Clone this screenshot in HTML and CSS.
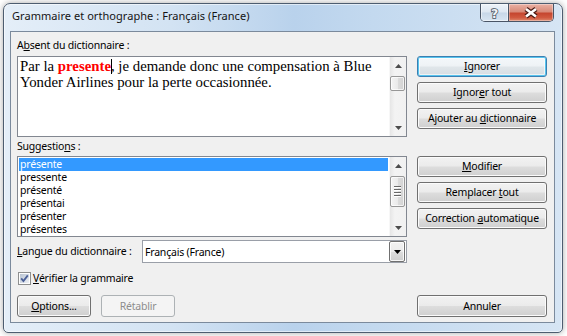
FILE: index.html
```html
<!DOCTYPE html>
<html lang="fr">
<head>
<meta charset="utf-8">
<title>Grammaire et orthographe</title>
<link rel="stylesheet" href="styles.css">
</head>
<body>
<div class="window">
  <div class="titlebar">
    <span class="title">Grammaire et orthographe : Français (France)</span>
    <div class="caption">
      <div class="cap-btn cap-help">
        <svg width="28" height="17" viewBox="0 0 28 17"><text x="14" y="14" text-anchor="middle" class="qmark">?</text></svg>
      </div>
      <div class="cap-btn cap-close">
        <svg width="44" height="17" viewBox="0 0 44 17"><path d="M17 5 L27 12.5 M27 5 L17 12.5" class="x-out"/><path d="M17 5 L27 12.5 M27 5 L17 12.5" class="x-in"/></svg>
      </div>
    </div>
  </div>
  <div class="client">
    <div class="row">
      <div class="col-left">
        <div class="label first">A<u>b</u>sent du dictionnaire :</div>
        <div class="box textbox">
          <div class="box-content serif">Par la <b class="err">presente</b><span class="caret"></span>, je demande donc une compensation à Blue<br>Yonder Airlines pour la perte occasionnée.</div>
          <div class="vscroll">
            <div class="arrow"><svg width="7" height="4" viewBox="0 0 7 4"><polygon points="0,4 3.5,0 7,4" class="tri"/></svg></div>
            <div class="track"><div class="thumb thumb-small"></div></div>
            <div class="arrow"><svg width="7" height="4" viewBox="0 0 7 4"><polygon points="0,0 7,0 3.5,4" class="tri"/></svg></div>
          </div>
        </div>
      </div>
      <div class="col-right">
        <button type="button" class="btn btn-default"><u>I</u>gnorer</button>
        <button type="button" class="btn">Ignor<u>e</u>r tout</button>
        <button type="button" class="btn">Ajouter au <u>d</u>ictionnaire</button>
      </div>
    </div>

    <div class="row">
      <div class="col-left">
        <div class="label second">Suggestio<u>n</u>s :</div>
        <div class="box listbox">
          <ul class="items">
            <li class="item selected">présente</li>
            <li class="item">pressente</li>
            <li class="item">présenté</li>
            <li class="item">présentai</li>
            <li class="item">présenter</li>
            <li class="item">présentes</li>
          </ul>
          <div class="vscroll">
            <div class="arrow"><svg width="7" height="4" viewBox="0 0 7 4"><polygon points="0,4 3.5,0 7,4" class="tri"/></svg></div>
            <div class="track"><div class="thumb thumb-large"><span class="grip"></span><span class="grip"></span><span class="grip"></span><span class="grip"></span></div></div>
            <div class="arrow"><svg width="7" height="4" viewBox="0 0 7 4"><polygon points="0,0 7,0 3.5,4" class="tri"/></svg></div>
          </div>
        </div>
      </div>
      <div class="col-right">
        <button type="button" class="btn"><u>M</u>odifier</button>
        <button type="button" class="btn">Remplacer <u>t</u>out</button>
        <button type="button" class="btn">Correction <u>a</u>utomatique</button>
      </div>
    </div>

    <div class="row lang-row">
      <div class="col-left lang">
        <span class="lang-label"><u>L</u>angue du dictionnaire :</span>
        <div class="combo">
          <span class="combo-text">Français (France)</span>
          <span class="combo-btn"><svg width="7" height="4" viewBox="0 0 7 4"><polygon points="0,0 7,0 3.5,4" class="tri-dark"/></svg></span>
        </div>
      </div>
    </div>

    <div class="row check-row">
      <svg class="checkbox" width="13" height="13" viewBox="0 0 13 13">
        <defs>
          <linearGradient id="cbg" x1="0" y1="0" x2="1" y2="1">
            <stop offset="0" stop-color="#b9c4d2"/>
            <stop offset="1" stop-color="#eef1f5"/>
          </linearGradient>
        </defs>
        <rect x="0.5" y="0.5" width="12" height="12" fill="#fdfdfd" stroke="#8e8f8f"/>
        <rect x="2" y="2" width="9" height="9" fill="url(#cbg)"/>
        <path d="M3.2 6.4 L5.4 9 L9.8 3.4" fill="none" stroke="#4a5f97" stroke-width="1.8"/>
      </svg>
      <span class="check-label"><u>V</u>érifier la grammaire</span>
    </div>

    <div class="row bottom-row">
      <div class="col-left bottom-left">
        <button type="button" class="btn btn-small"><u>O</u>ptions...</button>
        <button type="button" class="btn btn-small btn-disabled">Rétablir</button>
      </div>
      <div class="col-right">
        <button type="button" class="btn btn-tall">Annuler</button>
      </div>
    </div>
  </div>
</div>
</body>
</html>
```

FILE: styles.css
```css
* { box-sizing: border-box; }
html, body { margin: 0; padding: 0; }
body {
  width: 567px;
  height: 336px;
  overflow: hidden;
  background: #ffffff;
  font-family: "Noto Sans", "Open Sans", sans-serif;
  font-size: 10.5px;
  font-weight: 400;
  letter-spacing: -0.2px;
  color: #000;
  position: relative;
}

.window {
  position: absolute;
  left: 3px;
  top: 3px;
  width: 560px;
  height: 330px;
  border: 1px solid #4d5d70;
  border-radius: 7px 7px 5px 5px;
  background: linear-gradient(90deg, #e4eef8 0%, #d3e3f3 30%, #b9d2ec 52%, #c3d9ef 66%, #d6e5f4 100%);
  box-shadow: inset 0 0 0 1px rgba(255,255,255,0.55), 0 0 6px rgba(0,0,0,0.35);
  padding: 0 7px 9px 6px;
  display: flex;
  flex-direction: column;
}

.titlebar {
  height: 27px;
  display: flex;
  align-items: flex-start;
}
.title {
  margin-top: 4px;
  padding-left: 2px;
  font-size: 11px;
  letter-spacing: 0.05px;
  line-height: 16px;
  color: #141414;
}
.caption {
  margin-left: auto;
  margin-right: 1px;
  display: flex;
  height: 18px;
  border: 1px solid #4a5566;
  border-top: none;
  border-radius: 0 0 5px 5px;
  overflow: hidden;
}
.cap-btn { height: 17px; display: flex; }
.cap-help {
  width: 28px;
  border-right: 1px solid #4a5566;
  background: linear-gradient(180deg, #eef3f9 0%, #dde7f2 48%, #c7d7e8 52%, #d8e5f2 100%);
  box-shadow: inset 0 0 0 1px rgba(255,255,255,0.5);
}
.cap-close {
  width: 44px;
  background: linear-gradient(180deg, #eab1a4 0%, #d88a78 46%, #c5462f 54%, #d0593f 80%, #de8a6e 100%);
  box-shadow: inset 0 0 0 1px rgba(255,255,255,0.35);
}
.qmark {
  font-family: "DejaVu Sans", sans-serif;
  font-size: 13px;
  font-weight: bold;
  fill: #f2f4f6;
  stroke: #4b5562;
  stroke-width: 1.6px;
  paint-order: stroke;
}
.x-out { stroke: #4a1b14; stroke-width: 5; fill: none; }
.x-in { stroke: #ffffff; stroke-width: 2.6; fill: none; }

.client {
  width: 545px;
  height: 292px;
  border: 1px solid #7b8a9c;
  background: #f0f0f0;
  padding: 5px 7px 0 6px;
  display: flex;
  flex-direction: column;
}

.row { display: flex; gap: 10px; }
.col-left { width: 390px; display: flex; flex-direction: column; }
.col-right {
  width: 130px;
  display: flex;
  flex-direction: column;
  gap: 5px;
  padding-top: 19px;
}

.label { height: 19px; line-height: 15px; }
.label.first { padding-top: 1px; }
.label.second { padding-top: 2px; }
u { text-underline-offset: 1px; }

.box {
  height: 81px;
  border: 1px solid #828790;
  background: #ffffff;
  display: flex;
}
.box-content { flex: 1; padding: 1px 2px; }
.serif {
  font-family: "Liberation Serif", "Times New Roman", serif;
  font-size: 14.8px;
  letter-spacing: 0;
  line-height: 16px;
  color: #000;
}
.err { color: #ff0000; font-weight: bold; }
.caret {
  display: inline-block;
  width: 1px;
  height: 15px;
  background: #000;
  vertical-align: -3px;
  margin-right: -1px;
}

.vscroll {
  width: 17px;
  display: flex;
  flex-direction: column;
  background: linear-gradient(90deg, #e6e6e6 0%, #f3f3f3 30%, #f1f1f1 100%);
  border-left: 1px solid #f7f7f7;
}
.arrow {
  height: 17px;
  display: flex;
  align-items: center;
  justify-content: center;
}
.tri { fill: #4c4c4c; }
.tri-dark { fill: #000; }
.track { flex: 1; padding-top: 2px; }
.thumb {
  width: 15px;
  border: 1px solid #979797;
  border-radius: 2px;
  background: linear-gradient(90deg, #f4f4f4 0%, #eaeaea 50%, #dcdcdc 52%, #d3d3d3 100%);
  box-shadow: inset 0 0 0 1px rgba(255,255,255,0.7);
}
.thumb-small { height: 15px; }
.thumb-large {
  height: 31px;
  display: flex;
  flex-direction: column;
  align-items: center;
  justify-content: center;
  gap: 1px;
}
.grip {
  display: block;
  width: 7px;
  height: 2px;
  border-top: 1px solid #676767;
  border-bottom: 1px solid #ffffff;
}

.items {
  list-style: none;
  margin: 0;
  padding: 1px;
  flex: 1;
}
.item {
  height: 13px;
  line-height: 13px;
  padding-left: 1px;
  white-space: nowrap;
}
.item.selected { background: #3399ff; color: #ffffff; }

.lang-row { margin-top: 3px; }
.lang {
  flex-direction: row;
  align-items: center;
  height: 23px;
}
.lang-label { line-height: 15px; }
.combo {
  margin-left: auto;
  width: 265px;
  height: 23px;
  border: 1px solid #9a9fa8;
  background: #ffffff;
  display: flex;
  align-items: center;
  padding: 0 1px;
}
.combo-text { flex: 1; padding-left: 1px; }
.combo-btn {
  width: 16px;
  height: 21px;
  border: 1px solid #707070;
  border-radius: 2px;
  background: linear-gradient(180deg, #f2f2f2 0%, #ebebeb 50%, #dddddd 52%, #cfcfcf 100%);
  box-shadow: inset 0 0 0 1px rgba(255,255,255,0.8);
  display: flex;
  align-items: center;
  justify-content: center;
}

.check-row {
  margin-top: 9px;
  height: 13px;
  align-items: center;
  gap: 2px;
}
.checkbox { margin-left: 1px; display: block; }
.check-label { line-height: 15px; }

.bottom-row { margin-top: 10px; }
.bottom-left { flex-direction: row; gap: 10px; }
.bottom-row .col-right { padding-top: 0; }

.btn {
  font-family: "Noto Sans", "Open Sans", sans-serif;
  font-size: 10.5px;
  font-weight: 400;
  letter-spacing: -0.2px;
  color: #000;
  height: 21px;
  width: 130px;
  padding: 0;
  margin: 0;
  border: 1px solid #707070;
  border-radius: 3px;
  background: linear-gradient(180deg, #f2f2f2 0%, #ebebeb 48%, #dddddd 52%, #cfcfcf 100%);
  box-shadow: inset 0 0 0 1px #fbfbfb;
  line-height: 17px;
  text-align: center;
  white-space: nowrap;
}
.btn-default {
  border-color: #3c7fb1;
  background: linear-gradient(180deg, #f4f8fb 0%, #eef2f5 48%, #e0e6ea 52%, #d6dde2 100%);
  box-shadow: inset 0 0 0 1px #57c4ee, inset 0 0 0 2px rgba(255,255,255,0.6);
}
.btn-small { width: 74px; height: 22px; }
.btn-tall { height: 22px; }
.btn-disabled {
  color: #8d8d8d;
  border-color: #adb2b5;
  background: #f4f4f4;
  box-shadow: none;
}
```
